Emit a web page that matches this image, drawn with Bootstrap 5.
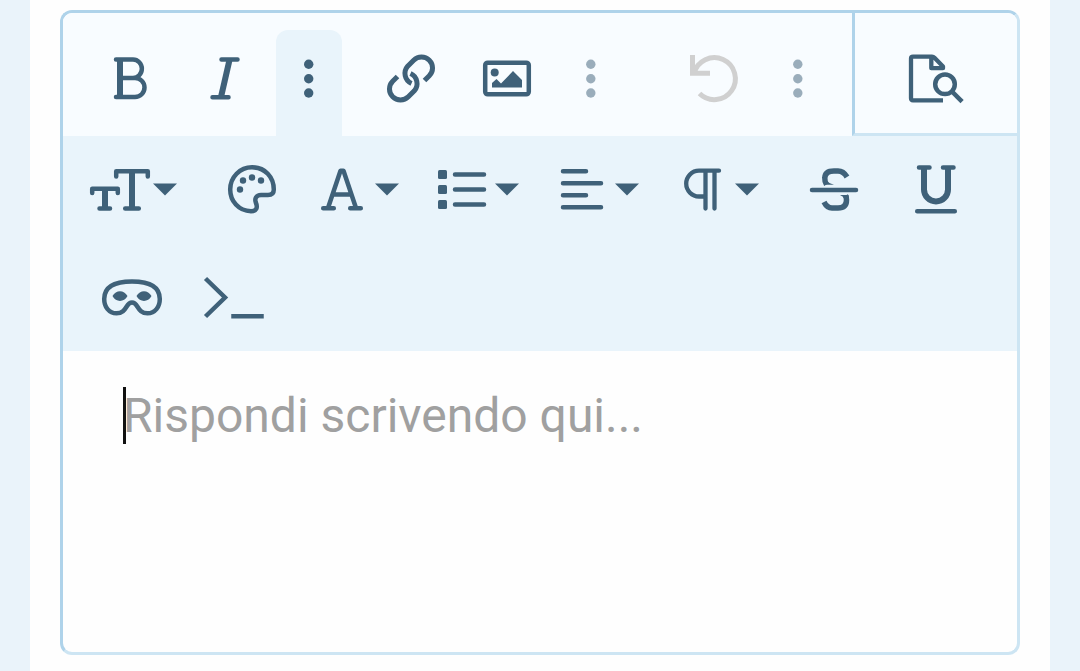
<!DOCTYPE html>
<html lang="it">
<head>
<meta charset="utf-8">
<meta name="viewport" content="width=device-width, initial-scale=1">
<title>Editor di risposta</title>
<link href="https://cdn.jsdelivr.net/npm/bootstrap@5.3.0/dist/css/bootstrap.min.css" rel="stylesheet">
<style>
  :root { --ink: #3f6179; --edge-dark: #afd3ea; --edge-light: #cde5f3; --panel: #e9f4fb; --bar: #f8fcff; }
  body { background: #eaf3fa; font-family: Roboto, sans-serif; }
  .page-sheet { background: #fefefe; margin: 0 30px; padding: 10px 30px 16px; }
  .editor { border: 3px solid; border-color: var(--edge-dark) var(--edge-light) var(--edge-light) var(--edge-dark); border-radius: 12px; background: #fefefe; }
  .bar-top { background: var(--bar); border-radius: 9px 9px 0 0; }
  .bar-main { padding: 17px 18px 0 21px; column-gap: 24px; }
  .tool-group { column-gap: 3px; }
  .tool-group-history { margin-left: 21px; }
  .tool { border: 0; padding: 0; background: none; color: var(--ink); border-radius: 12px 12px 0 0; height: 106px; width: 93px; }
  .tool svg { display: block; width: 100%; height: 106px; fill: none; stroke: currentColor; stroke-width: 5; }
  .tool .solid { fill: currentColor; stroke: none; }
  .tool-more { width: 66px; }
  .tool-more:not(.is-open) { opacity: .5; }
  .is-open { background: var(--panel); }
  .tool:disabled { color: #d0d0d0; }
  .preview-cell { width: 165px; border: solid; border-width: 0 0 3px 3px; border-color: transparent transparent var(--edge-light) var(--edge-dark); }
  .preview-cell .tool { width: 100%; }
  .bar-extra { background: var(--panel); padding: 0 21px 1px; gap: 2px 3px; }
  .bar-extra .tool { width: 99px; }
  .bar-extra .tool-menu { width: 117px; }
  .reply-box { padding: 36px 60px; height: 301px; font-size: 48px; line-height: 57px; border: 0; outline: 0; resize: none; background: none; color: #222; caret-color: transparent; }
  .reply-box::placeholder { color: #a0a0a0; opacity: 1; }
  .text-caret { left: 60px; top: 36px; width: 3px; height: 57px; background: #111; }
</style>
</head>
<body>
<main class="page-sheet min-vh-100">
  <form class="editor">
    <div class="bar-top d-flex">
      <div class="bar-main d-flex flex-grow-1" role="toolbar" aria-label="Formattazione">
        <div class="tool-group d-flex">
          <button type="button" class="tool" aria-label="Grassetto"><svg viewBox="84 30 93 106"><path d="M120 60V97" stroke-width="6"/><path d="M116 59.500H133A8.800 9.200 0 0 1 133 78H122M133 78H135A9.500 9.500 0 0 1 135 97H116" stroke-linecap="round" stroke-width="4.500"/></svg></button>
          <button type="button" class="tool" aria-label="Corsivo"><svg viewBox="180 30 93 106"><path d="M229.500 60l-8.500 37" stroke-width="6"/><path d="M221.500 59.500h16M212.500 97.300h16" stroke-linecap="round" stroke-width="4.500"/></svg></button>
          <button type="button" class="tool tool-more is-open" aria-label="Altre opzioni di testo" aria-expanded="true"><svg viewBox="276 30 66 106"><g class="solid"><circle cx="308.700" cy="64.300" r="4.700"/><circle cx="308.700" cy="78.700" r="4.700"/><circle cx="308.700" cy="93" r="4.700"/></g></svg></button>
        </div>
        <div class="tool-group d-flex">
          <button type="button" class="tool" aria-label="Collegamento"><svg viewBox="366 30 93 106"><path id="half" d="M411.500 83.500A11 11 0 0 1 407.700 66.200L413.700 60.200A11 11 0 0 1 429.300 75.800L424.500 80.600"/><use href="#half" transform="rotate(180 411 78.500)"/></svg></button>
          <button type="button" class="tool" aria-label="Immagine"><svg viewBox="462 30 93 106"><rect x="485.200" y="62.700" width="43.600" height="31.600" rx="2.500" stroke-width="4.500"/><circle class="solid" cx="494.700" cy="72.500" r="4"/><path class="solid" d="M492 87.500V83l4.500-4 4.500 4.500L513 71l9 9v7.500z"/></svg></button>
          <button type="button" class="tool tool-more" aria-label="Altre opzioni di inserimento"><svg viewBox="558 30 66 106"><g class="solid"><circle cx="590.800" cy="64.300" r="4.700"/><circle cx="590.800" cy="78.700" r="4.700"/><circle cx="590.800" cy="93" r="4.700"/></g></svg></button>
        </div>
        <div class="tool-group tool-group-history d-flex">
          <button type="button" class="tool" aria-label="Annulla" disabled><svg viewBox="669 30 93 106"><path d="M692.500 55V73.300H710M694 73.500A21 21 0 1 1 699.500 93.500"/></svg></button>
          <button type="button" class="tool tool-more" aria-label="Altre opzioni"><svg viewBox="765 30 66 106"><g class="solid"><circle cx="797.800" cy="64.300" r="4.700"/><circle cx="797.800" cy="78.700" r="4.700"/><circle cx="797.800" cy="93" r="4.700"/></g></svg></button>
        </div>
      </div>
      <div class="preview-cell d-flex align-items-end flex-shrink-0">
        <button type="button" class="tool" aria-label="Anteprima"><svg viewBox="855 27 162 106"><path d="M943 100.300H913q-2 0-2-2V58.700q0-2 2-2H932q1.500 0 2.500 1L943 66.500V68.200H931.300V57" stroke-width="4.300" stroke-linejoin="round"/><circle cx="945" cy="84.300" r="9.800" stroke-width="4.500"/><path d="M952.500 92l8 8" stroke-width="4.500" stroke-linecap="square"/></svg></button>
      </div>
    </div>
    <div class="bar-extra d-flex flex-wrap" role="toolbar" aria-label="Altre opzioni di testo">
      <button type="button" class="tool tool-menu" aria-label="Dimensione carattere" aria-haspopup="true"><svg viewBox="84 136 117 106"><path d="M132 171v37M105 189v19" stroke-width="6"/><path d="M116.200 176.500V171.200H147.800V176.500M125.200 208.500H138.800M92.200 193V188.700H117.800V193M99.500 208.500H110" stroke-linecap="round" stroke-linejoin="round" stroke-width="4.500"/><path class="solid" d="M153 183.500h24l-12 12z"/></svg></button>
      <button type="button" class="tool" aria-label="Colore del testo"><svg viewBox="204 136 99 106"><path d="M252 167.300C265 167.300 273.800 177 273.800 189.500C273.800 193.500 271.500 195 268 195H261C256 195 254.500 199 255.800 202.500C258 207.500 256.500 211.300 251 211.300C238.500 211 230.200 201 230.200 189.500C230.200 177 240 167.300 252 167.300Z" stroke-width="4.500"/><g class="solid"><circle cx="243" cy="180.500" r="3.200"/><circle cx="252" cy="177.500" r="3.200"/><circle cx="261" cy="180.500" r="3.200"/><circle cx="240" cy="189.500" r="3.200"/></g></svg></button>
      <button type="button" class="tool tool-menu" aria-label="Famiglia di caratteri" aria-haspopup="true"><svg viewBox="306 136 117 106"><path d="M328 208L340.500 170.700H343.500L356 208M332.500 194.500H352" stroke-linejoin="round" stroke-width="4.500"/><path d="M323.200 208.300H333.800M350.200 208.300H360.800" stroke-linecap="round" stroke-width="4.500"/><path class="solid" d="M375 183.500h24l-12 12z"/></svg></button>
      <button type="button" class="tool tool-menu" aria-label="Elenco" aria-haspopup="true"><svg viewBox="426 136 117 106"><g class="solid"><rect x="438" y="170" width="9" height="9" rx="1.500"/><rect x="438" y="185" width="9" height="9" rx="1.500"/><rect x="438" y="200" width="9" height="9" rx="1.500"/><path d="M495 183.500h24l-12 12z"/></g><path d="M455 174.600H484M455 189.600H484M455 204.600H484" stroke-width="4.500" stroke-linecap="round"/></svg></button>
      <button type="button" class="tool tool-menu" aria-label="Allineamento" aria-haspopup="true"><svg viewBox="546 136 117 106"><path d="M563 171.200H586M563 183.200H601M563 195.200H586M563 207.200H601" stroke-width="4.500" stroke-linecap="round"/><path class="solid" d="M615 183.500h24l-12 12z"/></svg></button>
      <button type="button" class="tool tool-menu" aria-label="Formato paragrafo" aria-haspopup="true"><svg viewBox="666 136 117 106"><path d="M719 170.700H699A12.800 12.900 0 0 0 699 196.500H705.500M705.500 171V208.500M714.500 171V208.500" stroke-width="4.300" stroke-linecap="round"/><path class="solid" d="M735 183.500h24l-12 12z"/></svg></button>
      <button type="button" class="tool" aria-label="Barrato"><svg viewBox="786 136 99 106"><path d="M847 177Q843.500 171 838 171H834Q825 171 824.800 178Q824.600 181.500 826.500 184.500" stroke-width="5.500"/><path class="solid" d="M827 181.500Q829.500 183.500 834 184.800H825zM840 195H848.500L849 199H844.500Q843.500 196.500 840 195z"/><path d="M824 202Q827 208 832 208H838Q846.500 208 846.500 200Q846.500 197.500 845.500 195.500" stroke-width="5.500"/><path d="M812 190.100H856" stroke-width="4.500" stroke-linecap="round"/></svg></button>
      <button type="button" class="tool" aria-label="Sottolineato"><svg viewBox="888 136 99 106"><path d="M924 168V189.500A12 12 0 0 0 948 189.500V168" stroke-width="6"/><path d="M919 167.500H929.500M943 167.500H953.500M917.200 211.200H954.800" stroke-width="4.500" stroke-linecap="round"/></svg></button>
      <button type="button" class="tool" aria-label="Spoiler"><svg viewBox="84 244 99 106"><path d="M132 281.500C148 281.500 159.800 286 159.800 299C159.800 307 155 313.300 147.500 313.300C137 313.300 138.500 302.500 132 302.500C125.500 302.500 127 313.300 116.500 313.300C109 313.300 104.200 307 104.200 299C104.200 286 116 281.500 132 281.500Z" stroke-width="4.500"/><path class="solid" d="M112.500 296C116 289.500 124 289.500 127.500 296C124 302.500 116 302.500 112.500 296zM136.500 296C140 289.500 148 289.500 151.500 296C148 302.500 140 302.500 136.500 296z"/></svg></button>
      <button type="button" class="tool" aria-label="Codice in linea"><svg viewBox="186 244 99 106"><path d="M205.500 278.500L225 297.500L205.500 316.500" stroke-width="4.500"/><path d="M233.500 316.200H261.500" stroke-width="4.500" stroke-linecap="square"/></svg></button>
    </div>
    <div class="position-relative">
      <textarea class="reply-box d-block w-100" aria-label="Risposta" placeholder="Rispondi scrivendo qui..."></textarea>
      <span class="text-caret position-absolute" aria-hidden="true"></span>
    </div>
  </form>
</main>
</body>
</html>
